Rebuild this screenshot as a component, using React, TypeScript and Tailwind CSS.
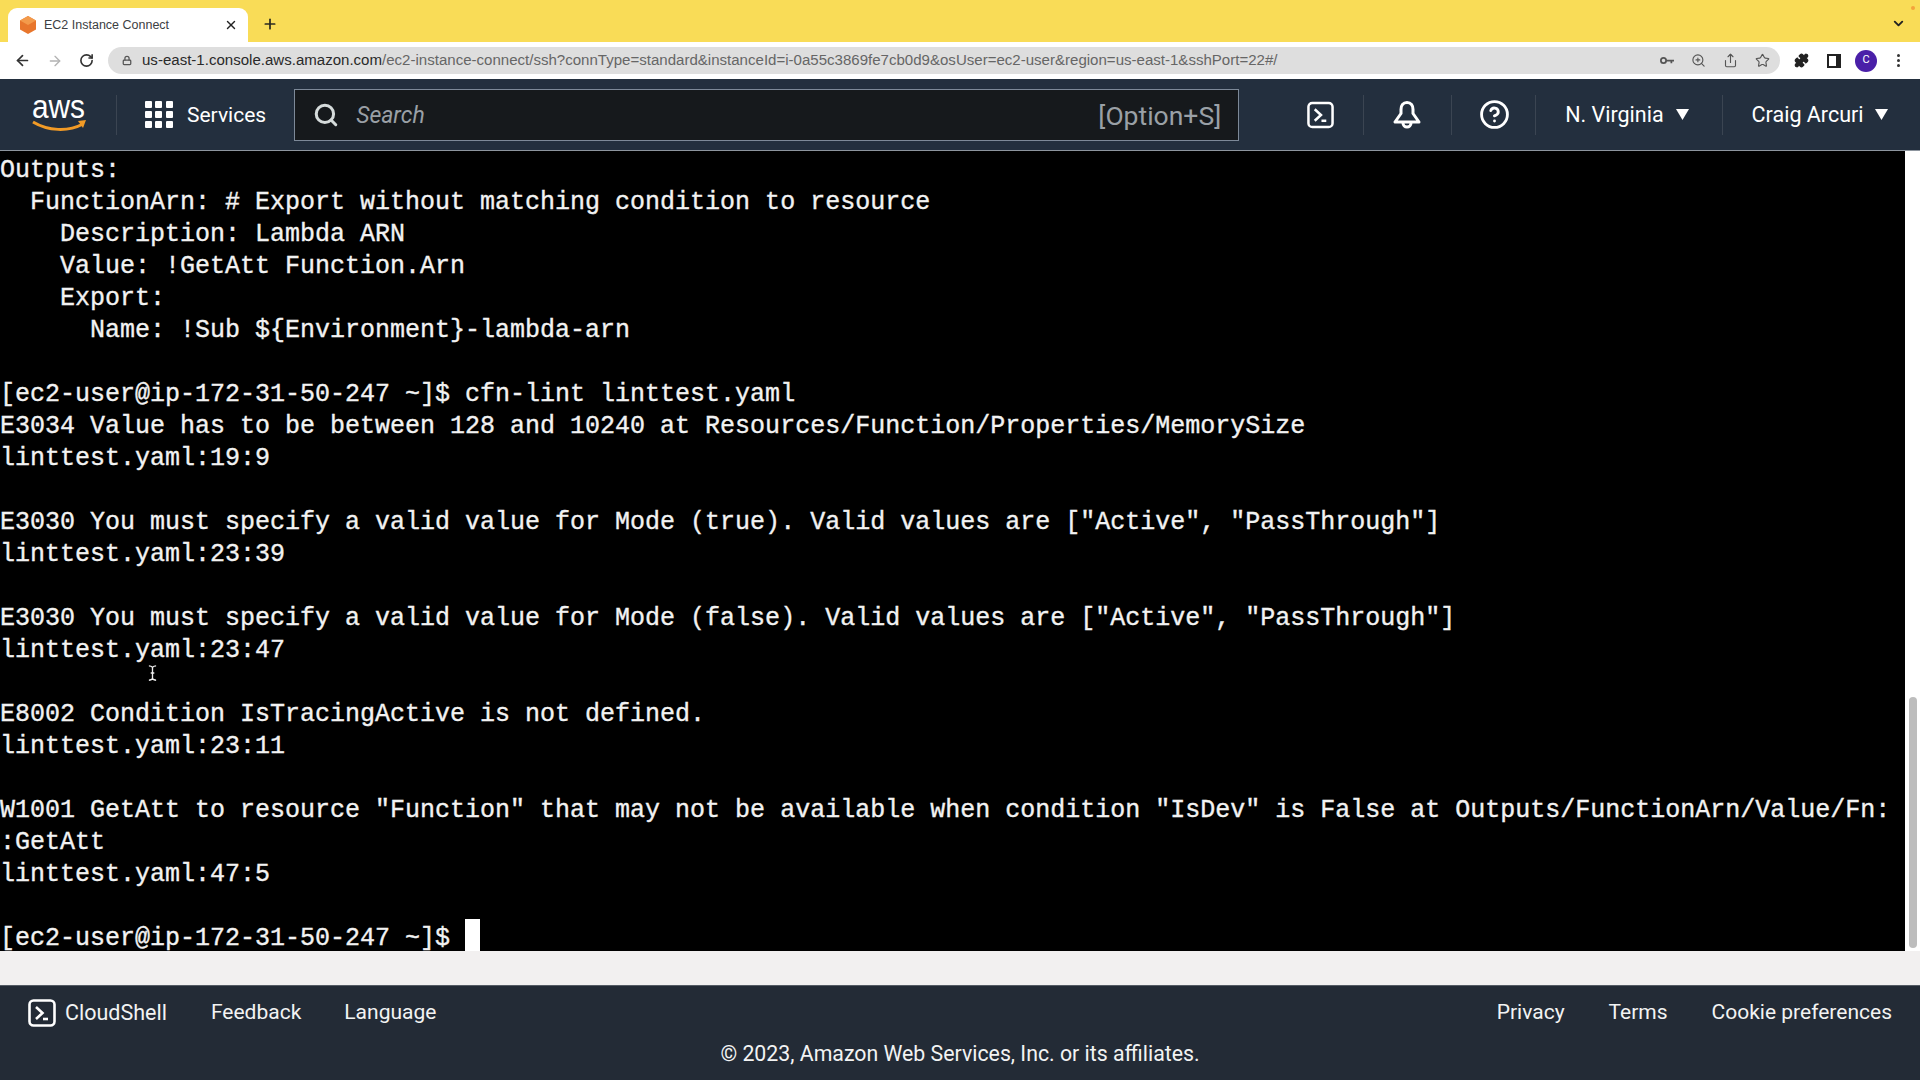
import { ArrowLeft, ArrowRight, RotateCw, X, Plus, Lock, ZoomIn, Share, Star, Puzzle, ChevronDown, CircleHelp, Search } from "lucide-react";

const lines = [
  "Outputs:",
  "  FunctionArn: # Export without matching condition to resource",
  "    Description: Lambda ARN",
  "    Value: !GetAtt Function.Arn",
  "    Export:",
  "      Name: !Sub ${Environment}-lambda-arn",
  "",
  "[ec2-user@ip-172-31-50-247 ~]$ cfn-lint linttest.yaml",
  "E3034 Value has to be between 128 and 10240 at Resources/Function/Properties/MemorySize",
  "linttest.yaml:19:9",
  "",
  'E3030 You must specify a valid value for Mode (true). Valid values are ["Active", "PassThrough"]',
  "linttest.yaml:23:39",
  "",
  'E3030 You must specify a valid value for Mode (false). Valid values are ["Active", "PassThrough"]',
  "linttest.yaml:23:47",
  "",
  "E8002 Condition IsTracingActive is not defined.",
  "linttest.yaml:23:11",
  "",
  'W1001 GetAtt to resource "Function" that may not be available when condition "IsDev" is False at Outputs/FunctionArn/Value/Fn:',
  ":GetAtt",
  "linttest.yaml:47:5",
  "",
];

function ShellIcon({ className }: { className: string }) {
  return (
    <svg viewBox="0 0 28 28" className={className} fill="none" stroke="white">
      <rect x="1.5" y="1.5" width="25" height="25" rx="4" strokeWidth="2.6" />
      <path d="M8 8l6.500 6L8 20" strokeWidth="2.6" />
      <path d="M15 20h5" strokeWidth="2.6" />
    </svg>
  );
}

function Sep() {
  return <div className="w-px h-[40px] bg-[#3b4552]" />;
}

function Tri() {
  return (
    <svg viewBox="0 0 13 11" className="w-[13px] h-[11px]">
      <path d="M0 0h13L6.500 11z" fill="white" />
    </svg>
  );
}

export default function App() {
  return (
    <div className="relative w-[1920px] h-[1080px] overflow-hidden flex flex-col bg-white font-['Roboto',sans-serif]">
      {/* Tab strip */}
      <div className="h-[42px] bg-[#f9dc57] flex items-end pl-[8px] pr-[14px] shrink-0">
        <div className="w-[240px] h-[34px] bg-white rounded-t-[9px] flex items-center pl-[12px] pr-[10px]">
          <svg viewBox="0 0 16 18" className="w-[16px] h-[18px] shrink-0">
            <path d="M8 0l8 4.500v9L8 18l-8-4.500v-9z" fill="#e8762c" />
            <path d="M8 0l8 4.500L8 9 0 4.500z" fill="#f39a4b" />
          </svg>
          <span className="ml-[8px] text-[12.5px] text-[#3c4043] font-['Liberation_Sans',sans-serif] whitespace-nowrap">EC2 Instance Connect</span>
          <X className="ml-auto w-[14px] h-[14px] text-[#222]" strokeWidth={2.4} />
        </div>
        <Plus className="ml-[14px] mb-[10px] w-[16px] h-[16px] text-[#2a2a20]" strokeWidth={2.6} />
        <ChevronDown className="ml-auto mb-[11px] w-[15px] h-[15px] text-[#222]" strokeWidth={3} />
      </div>
      {/* Toolbar */}
      <div className="h-[37px] bg-white flex items-center shrink-0 pl-[14px]">
        <ArrowLeft className="w-[17px] h-[17px] text-[#333]" strokeWidth={2.4} />
        <ArrowRight className="ml-[16px] w-[16px] h-[16px] text-[#b3b3b3]" strokeWidth={2} />
        <RotateCw className="ml-[16px] w-[15px] h-[15px] text-[#333]" strokeWidth={2.6} />
        <div className="ml-[14px] w-[1672px] h-[27px] bg-[#dedede] rounded-full flex items-center pl-[14px] pr-[10px]">
          <Lock className="w-[10px] h-[11px] text-[#555]" strokeWidth={3} />
          <span className="ml-[10px] text-[15.05px] whitespace-nowrap font-['Liberation_Sans',sans-serif] text-[#666]">
            <span className="text-[#2a2a2a]">us-east-1.console.aws.amazon.com</span>/ec2-instance-connect/ssh?connType=standard&instanceId=i-0a55c3869fe7cb0d9&osUser=ec2-user&region=us-east-1&sshPort=22#/
          </span>
          <div className="ml-auto flex items-center gap-[17px] text-[#555]">
            <svg viewBox="0 0 16 10" className="w-[14px] h-[9px]">
              <circle cx="4" cy="5" r="3" fill="none" stroke="#555" strokeWidth="2" />
              <path d="M7 4h9v2h-2v2h-2V6H7z" fill="#555" />
            </svg>
            <ZoomIn className="w-[15px] h-[15px]" strokeWidth={1.8} />
            <Share className="w-[15px] h-[15px]" strokeWidth={1.8} />
            <Star className="w-[15px] h-[15px]" strokeWidth={1.8} />
          </div>
        </div>
        <Puzzle className="ml-[14px] w-[15px] h-[15px] text-[#222] fill-[#222]" />
        <div className="ml-[18px] w-[14px] h-[14px] border-2 border-[#222] border-r-[5px]" />
        <div className="ml-[14px] w-[22px] h-[22px] rounded-full bg-[#4a1fa8] text-white text-[11px] flex items-center justify-center">C</div>
        <div className="ml-[20px] flex flex-col gap-[2px]">
          <div className="w-[3px] h-[3px] rounded-full bg-[#333]" />
          <div className="w-[3px] h-[3px] rounded-full bg-[#333]" />
          <div className="w-[3px] h-[3px] rounded-full bg-[#333]" />
        </div>
      </div>
      {/* AWS nav */}
      <div className="h-[72px] bg-[#232f3e] flex items-center shrink-0 text-white text-[21.5px] border-b border-[#8d959e]">
        <svg viewBox="0 0 55 66" className="ml-[32px] w-[55px] h-[66px] overflow-visible">
          <text x="0" y="36" fontSize="34" fill="white" fontFamily="Liberation Sans" textLength="53" lengthAdjust="spacingAndGlyphs">aws</text>
          <path d="M1 40c15 9 35 10 50 2" fill="none" stroke="#f29b26" strokeWidth="3" />
          <path d="M46 39l8-1-3 8" fill="#f29b26" />
        </svg>
        <div className="ml-[29px]"><Sep /></div>
        <div className="ml-[28px] grid grid-cols-3 gap-[3px] w-[28px]">
          {Array.from({ length: 9 }).map((_, i) => (
            <div key={i} className="w-[7px] h-[7px] bg-white rounded-[1px]" />
          ))}
        </div>
        <span className="ml-[14px] text-[21px] pt-[2px]">Services</span>
        <div className="ml-[28px] w-[945px] h-[52px] bg-[#16191c] border border-[#7d8998] flex items-center pl-[18px] pr-[17px]">
          <Search className="w-[26px] h-[26px] text-[#d5dbdb]" strokeWidth={2.8} />
          <span className="ml-[17px] italic text-[23px] pt-[3px] text-[#9aa0a6]">Search</span>
          <span className="ml-auto text-[#9aa0a6] text-[26.5px] pt-[2px]">[Option+S]</span>
        </div>
        <ShellIcon className="ml-[68px] w-[27px] h-[28px]" />
        <div className="ml-[29px]"><Sep /></div>
        <svg viewBox="0 0 28 30" className="ml-[29px] w-[28px] h-[30px]" fill="none" stroke="white" strokeWidth="3">
          <path d="M14 2.500c-4 0-6 3-6 7v4L2 22h24l-6-8.500v-4c0-4-2-7-6-7z" strokeLinejoin="round" />
          <path d="M10 23a4 4 0 0 0 8 0" />
        </svg>
        <div className="ml-[30px]"><Sep /></div>
        <CircleHelp className="ml-[27px] w-[31px] h-[31px]" strokeWidth={2.2} />
        <div className="ml-[25px]"><Sep /></div>
        <span className="ml-[29px] pt-[2px]">N. Virginia</span>
        <div className="ml-[12px]"><Tri /></div>
        <div className="ml-[33px]"><Sep /></div>
        <span className="ml-[29px] pt-[2px]">Craig Arcuri</span>
        <div className="ml-[11px]"><Tri /></div>
      </div>
      {/* Terminal */}
      <div className="h-[800px] flex shrink-0">
        <div className="w-[1905px] pt-[4px] bg-black text-[25px] leading-[32px] text-[#f2f2f2] [-webkit-text-stroke:0.35px_#f2f2f2] font-['Liberation_Mono',monospace] whitespace-pre">
          {lines.map((l, i) => (
            <div key={i} className="h-[32px]">{l}</div>
          ))}
          <div className="h-[28px] flex">
            <span>{"[ec2-user@ip-172-31-50-247 ~]$ "}</span>
            <div className="w-[15px] h-[32px] -mt-[4px] bg-white" />
          </div>
        </div>
        <div className="flex-1 bg-white flex justify-center items-end pb-[3px]">
          <div className="w-[8px] h-[251px] rounded-full bg-[#bdbdbd]" />
        </div>
      </div>
      {/* Gap band */}
      <div className="h-[34px] bg-[#f2f0f0] shrink-0" />
      {/* Footer */}
      <div className="flex-1 bg-[#232b36] border-t border-[#545b64] text-[#f2f3f3] text-[21px] flex flex-col">
        <div className="h-[54px] flex items-center pl-[28px] pr-[28px]">
          <ShellIcon className="w-[28px] h-[28px]" />
          <span className="ml-[9px] text-[21.5px]">CloudShell</span>
          <span className="ml-[44px]">Feedback</span>
          <span className="ml-[43px]">Language</span>
          <span className="ml-auto">Privacy</span>
          <span className="ml-[44px]">Terms</span>
          <span className="ml-[44px]">Cookie preferences</span>
        </div>
        <div className="text-center text-[21.3px] leading-[28px]">© 2023, Amazon Web Services, Inc. or its affiliates.</div>
      </div>
      {/* Mouse I-beam and notification dot overlay */}
      <svg viewBox="0 0 10 18" className="absolute left-[148px] top-[664px] w-[9px] h-[18px]" fill="none" stroke="#eee" strokeWidth="1.5">
        <path d="M1 1c2 0 3 .5 4 1.500C6 1.500 7 1 9 1M5 2.500v13M1 17c2 0 3-.5 4-1.500C6 16.500 7 17 9 17M3 9h4" />
      </svg>
      <div className="absolute left-[1911px] top-[6px] w-[4px] h-[4px] rounded-full bg-[#f4a23c]" />
    </div>
  );
}
